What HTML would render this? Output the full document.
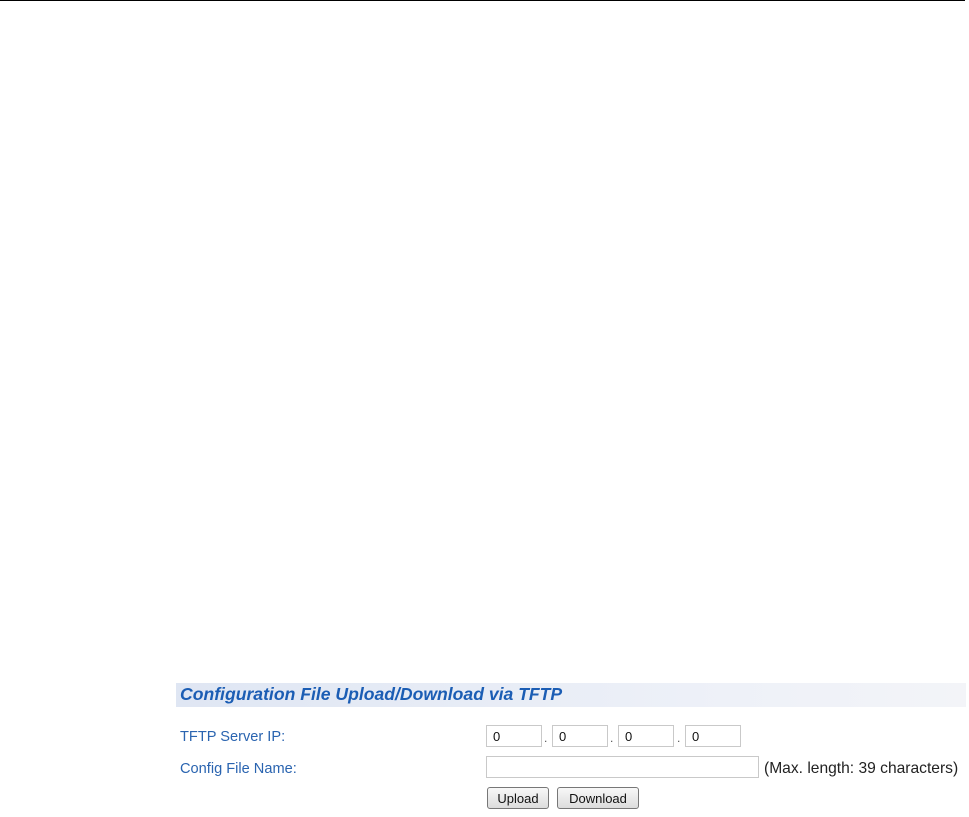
<!DOCTYPE html>
<html><head><style>
body{margin:0;width:969px;height:817px;background:#fff;position:relative;font-family:"Liberation Sans",Arial,sans-serif;overflow:hidden}
.a{position:absolute;white-space:nowrap}
.top{left:0;top:0;width:965px;height:1px;background:#000}
.bar{left:176px;top:683px;width:790px;height:24px;background:linear-gradient(90deg,#dfe6f3,#eef1f8 70%,#f3f4f8)}
.title{left:180px;top:684px;font-size:17.6px;font-weight:bold;font-style:italic;color:#1b5db4}
.lbl{font-size:14.6px;color:#2a64b0}
.in{height:22px;border:1px solid #c9c9c9;background:#fff;box-sizing:border-box;font-size:13px;padding:3px 0 0 6px;color:#111}
.dot{font-size:12px;color:#555}
.btn{height:22px;border:1px solid #777;border-radius:3px;background:linear-gradient(#f8f8f8,#dcdcdc);box-sizing:border-box;font-size:13px;color:#111;text-align:center;padding-top:3px}
</style></head><body>
<div class="a top"></div>
<div class="a bar"></div>
<div class="a title">Configuration File Upload/Download via TFTP</div>
<div class="a lbl" style="left:180px;top:729px">TFTP Server IP:</div>
<div class="a lbl" style="left:180px;top:761px">Config File Name:</div>
<div class="a in" style="left:486px;top:725px;width:56px">0</div>
<div class="a dot" style="left:544px;top:731px">.</div>
<div class="a in" style="left:552px;top:725px;width:56px">0</div>
<div class="a dot" style="left:610px;top:731px">.</div>
<div class="a in" style="left:618px;top:725px;width:56px">0</div>
<div class="a dot" style="left:677px;top:731px">.</div>
<div class="a in" style="left:685px;top:725px;width:56px">0</div>
<div class="a in" style="left:486px;top:756px;width:273px"></div>
<div class="a" style="left:764px;top:760px;font-size:15.6px;color:#222">(Max. length: 39 characters)</div>
<div class="a btn" style="left:487px;top:787px;width:62px">Upload</div>
<div class="a btn" style="left:557px;top:787px;width:82px">Download</div>
</body></html>
